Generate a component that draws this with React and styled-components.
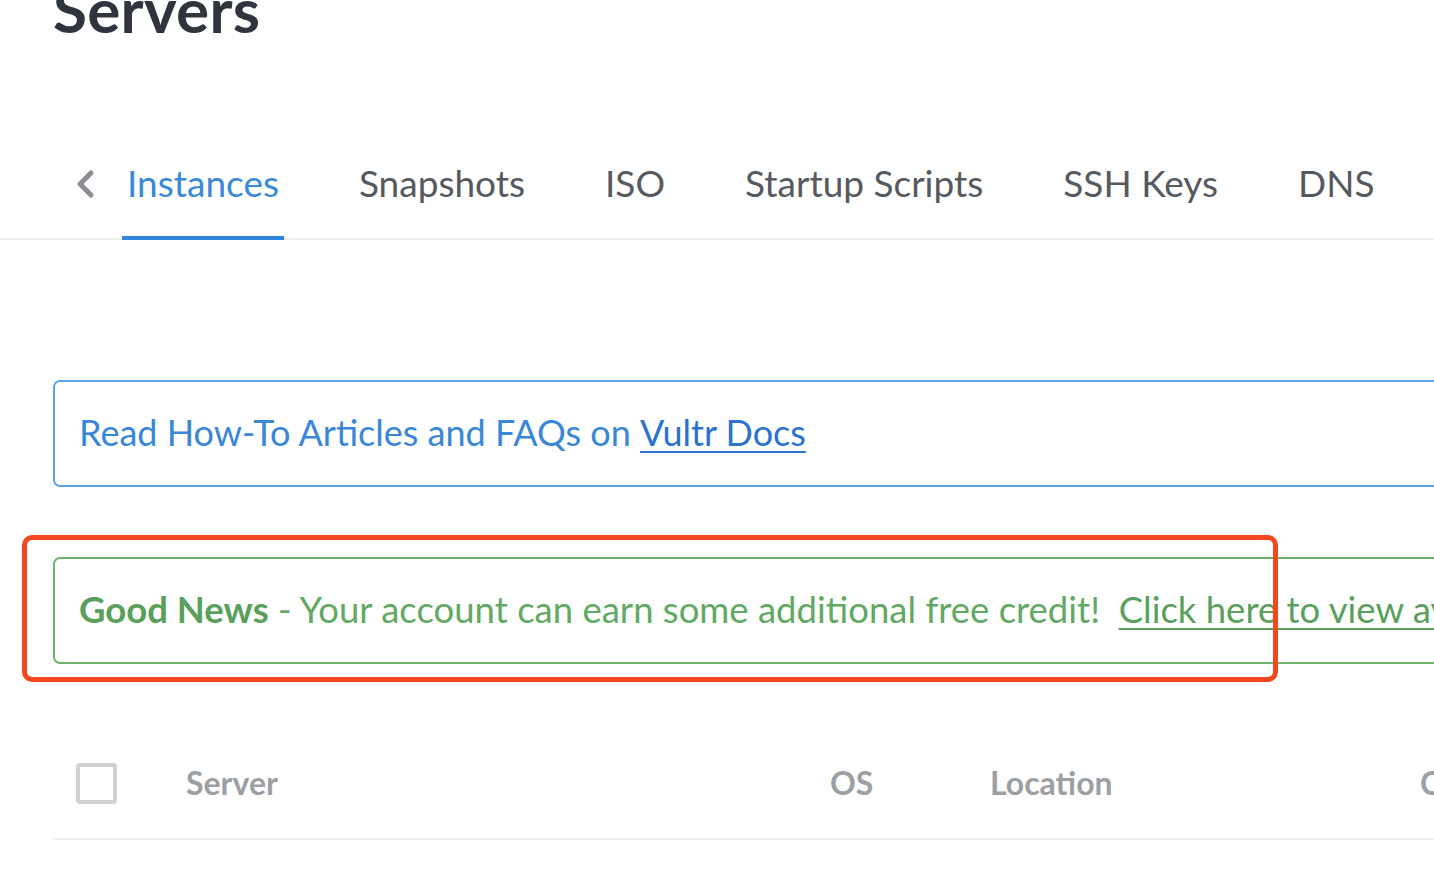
import React from "react";
import styled, {createGlobalStyle} from "styled-components";

const GlobalStyle = createGlobalStyle`
    html, body {
        margin: 0;
        padding: 0;
        background: #ffffff;
        overflow: hidden;
    }
    body {
        font-family: Lato, "Open Sans", sans-serif;
        color: #333840;
    }
`;

const Page = styled.div`
    position: relative;
    width: 1434px;
    height: 876px;
    overflow: hidden;
`;

const Title = styled.h1`
    margin: -22px 0 0 53px;
    font-size: 62px;
    line-height: 1;
    font-weight: 700;
    color: #30353d;
    letter-spacing: 0.3px;
`;

const TabBar = styled.nav`
    display: flex;
    align-items: flex-end;
    margin-top: 107px;
    height: 93px;
    border-bottom: 2px solid #eceef2;
    box-sizing: border-box;
`;

const Back = styled.div`
    width: 122px;
    height: 100%;
    display: flex;
    align-items: center;
    padding-left: 74px;
    box-sizing: border-box;
    padding-bottom: 18px;
    color: #8a8d92;
`;

const Tabs = styled.div`
    display: flex;
    gap: 70px;
    height: 100%;
`;

const Tab = styled.div`
    display: flex;
    align-items: center;
    padding: 0 5px 19px 5px;
    font-size: 37px;
    color: ${p => p.active ? "#3b89d9" : "#56595e"};
    border-bottom: 4px solid ${p => p.active ? "#2e86de" : "transparent"};
    margin-bottom: -2px;
    white-space: nowrap;
`;

const Content = styled.div`
    width: 1600px;
    margin-left: 53px;
`;

const Notice = styled.div`
    height: 107px;
    box-sizing: border-box;
    border: 2px solid ${p => p.tone === "green" ? "#6db46c" : "#5ea2e8"};
    border-radius: 7px;
    display: flex;
    align-items: center;
    padding: 0 24px 4px 24px;
    margin-top: ${p => p.top}px;
    font-size: ${p => p.tone === "green" ? 36.5 : 36}px;
    white-space: nowrap;
    color: ${p => p.tone === "green" ? "#62a963" : "#3a87d8"};
`;

const NoticeLink = styled.a`
    color: ${p => p.tone === "green" ? "#5a9f5b" : "#2b73cf"};
    text-decoration: underline;
    text-underline-offset: 5px;
    text-decoration-thickness: 2px;
`;

const Strong = styled.strong`
    font-weight: 700;
    color: #5a9f5b;
`;

const Highlight = styled.div`
    position: absolute;
    left: 22px;
    top: 535px;
    width: 1256px;
    height: 147px;
    box-sizing: border-box;
    border: 5px solid #f3481f;
    border-radius: 10px;
    pointer-events: none;
`;

const HeaderRow = styled.div`
    display: grid;
    grid-template-columns: 110px 644px 160px 430px 200px;
    align-items: center;
    height: 176px;
    padding: 64px 0 0 23px;
    box-sizing: border-box;
    border-bottom: 2px solid #eceef2;
`;

const Check = styled.div`
    width: 41px;
    height: 41px;
    box-sizing: border-box;
    border: 4px solid #cfd2d5;
    border-radius: 4px;
`;

const HeadCell = styled.div`
    font-size: 32px;
    font-weight: 700;
    color: #9c9fa4;
    margin-top: -2px;
`;

export default function App() {
    const tabs = ["Instances", "Snapshots", "ISO", "Startup Scripts", "SSH Keys", "DNS"];
    return (
        <Page>
            <GlobalStyle />
            <Title>Servers</Title>
            <TabBar>
                <Back>
                    <svg width="22" height="32" viewBox="0 0 22 32">
                        <path d="M17 5 L6 16 L17 27" fill="none" stroke="#8a8d92" strokeWidth="5" strokeLinecap="round" strokeLinejoin="round" />
                    </svg>
                </Back>
                <Tabs>
                    {tabs.map((t, i) => (
                        <Tab key={t} active={i === 0}>{t}</Tab>
                    ))}
                </Tabs>
            </TabBar>
            <Content>
                <Notice top={140}>
                    Read How-To Articles and FAQs on&nbsp;<NoticeLink>Vultr Docs</NoticeLink>
                </Notice>
                <Notice tone="green" top={70}>
                    <Strong>Good News</Strong>&nbsp;- Your account can earn some additional free credit!&nbsp;&nbsp;
                    <NoticeLink tone="green">Click here to view available offers</NoticeLink>
                </Notice>
                <HeaderRow>
                    <Check />
                    <HeadCell>Server</HeadCell>
                    <HeadCell>OS</HeadCell>
                    <HeadCell>Location</HeadCell>
                    <HeadCell>Charges</HeadCell>
                </HeaderRow>
            </Content>
            <Highlight />
        </Page>
    );
}
